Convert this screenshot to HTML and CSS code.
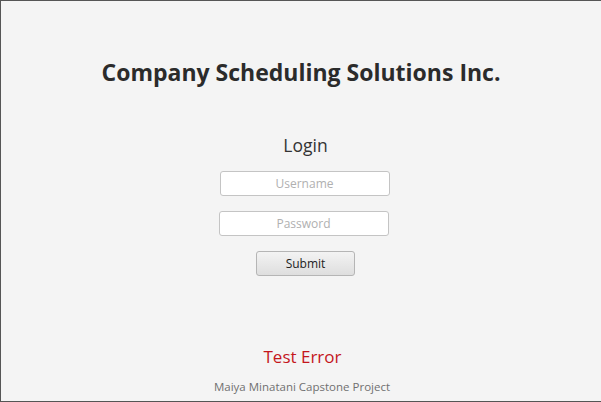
FILE: index.html
```html
<!DOCTYPE html>
<html>
<head>
<meta charset="utf-8">
<link rel="stylesheet" href="styles.css">
</head>
<body>
<div class="window">
  <h1 class="title">Company Scheduling Solutions Inc.</h1>
  <div class="form">
    <div class="login">Login</div>
    <input class="field field-user" type="text" placeholder="Username">
    <input class="field field-pass" type="password" placeholder="Password">
    <button class="submit" type="button">Submit</button>
  </div>
  <div class="error">Test Error</div>
  <div class="footer">Maiya Minatani Capstone Project</div>
</div>
</body>
</html>
```
FILE: styles.css
```css
* { box-sizing: border-box; }
html, body { margin: 0; padding: 0; }
body {
  font-family: "Open Sans", "Noto Sans", "DejaVu Sans", sans-serif;
  background: #f4f4f4;
}
.window {
  width: 601px;
  height: 402px;
  border-top: 1px solid #555;
  border-left: 1px solid #555;
  border-bottom: 1px solid #555;
  background: #f4f4f4;
  display: flex;
  flex-direction: column;
  align-items: center;
  padding-top: 56px;
  overflow: hidden;
}
.title {
  margin: 0;
  font-size: 23px;
  line-height: 30px;
  font-weight: 700;
  color: #2b2b2b;
  letter-spacing: 0;
}
.form {
  display: flex;
  flex-direction: column;
  align-items: center;
  padding-left: 5px;
  margin-top: 46px;
}
.login {
  padding-left: 4px;
  font-size: 17.5px;
  line-height: 24px;
  color: #333;
}
.field {
  width: 170px;
  height: 25px;
  border: 1px solid #c4c4c4;
  border-radius: 3px;
  background: #fff;
  font-family: inherit;
  font-size: 12px;
  text-align: center;
  color: #333;
  padding: 0 6px;
  outline: none;
}
.field::placeholder { color: #b0b0b0; }
.field-user { margin-top: 14px; margin-left: 2px; }
.field-pass { margin-top: 15px; }
.submit {
  margin-top: 15px;
  width: 99px;
  height: 25px;
  border: 1px solid #b5b5b5;
  border-radius: 3px;
  background: linear-gradient(#f3f3f3, #dedede);
  font-family: inherit;
  font-size: 12px;
  color: #222;
  padding: 0;
  margin-left: 4px;
}
.error {
  margin-top: 69px;
  padding-left: 3px;
  font-size: 17px;
  line-height: 24px;
  color: #c4161c;
}
.footer {
  margin-top: 10px;
  padding-left: 2px;
  font-size: 11.5px;
  line-height: 16px;
  color: #707070;
}
```
